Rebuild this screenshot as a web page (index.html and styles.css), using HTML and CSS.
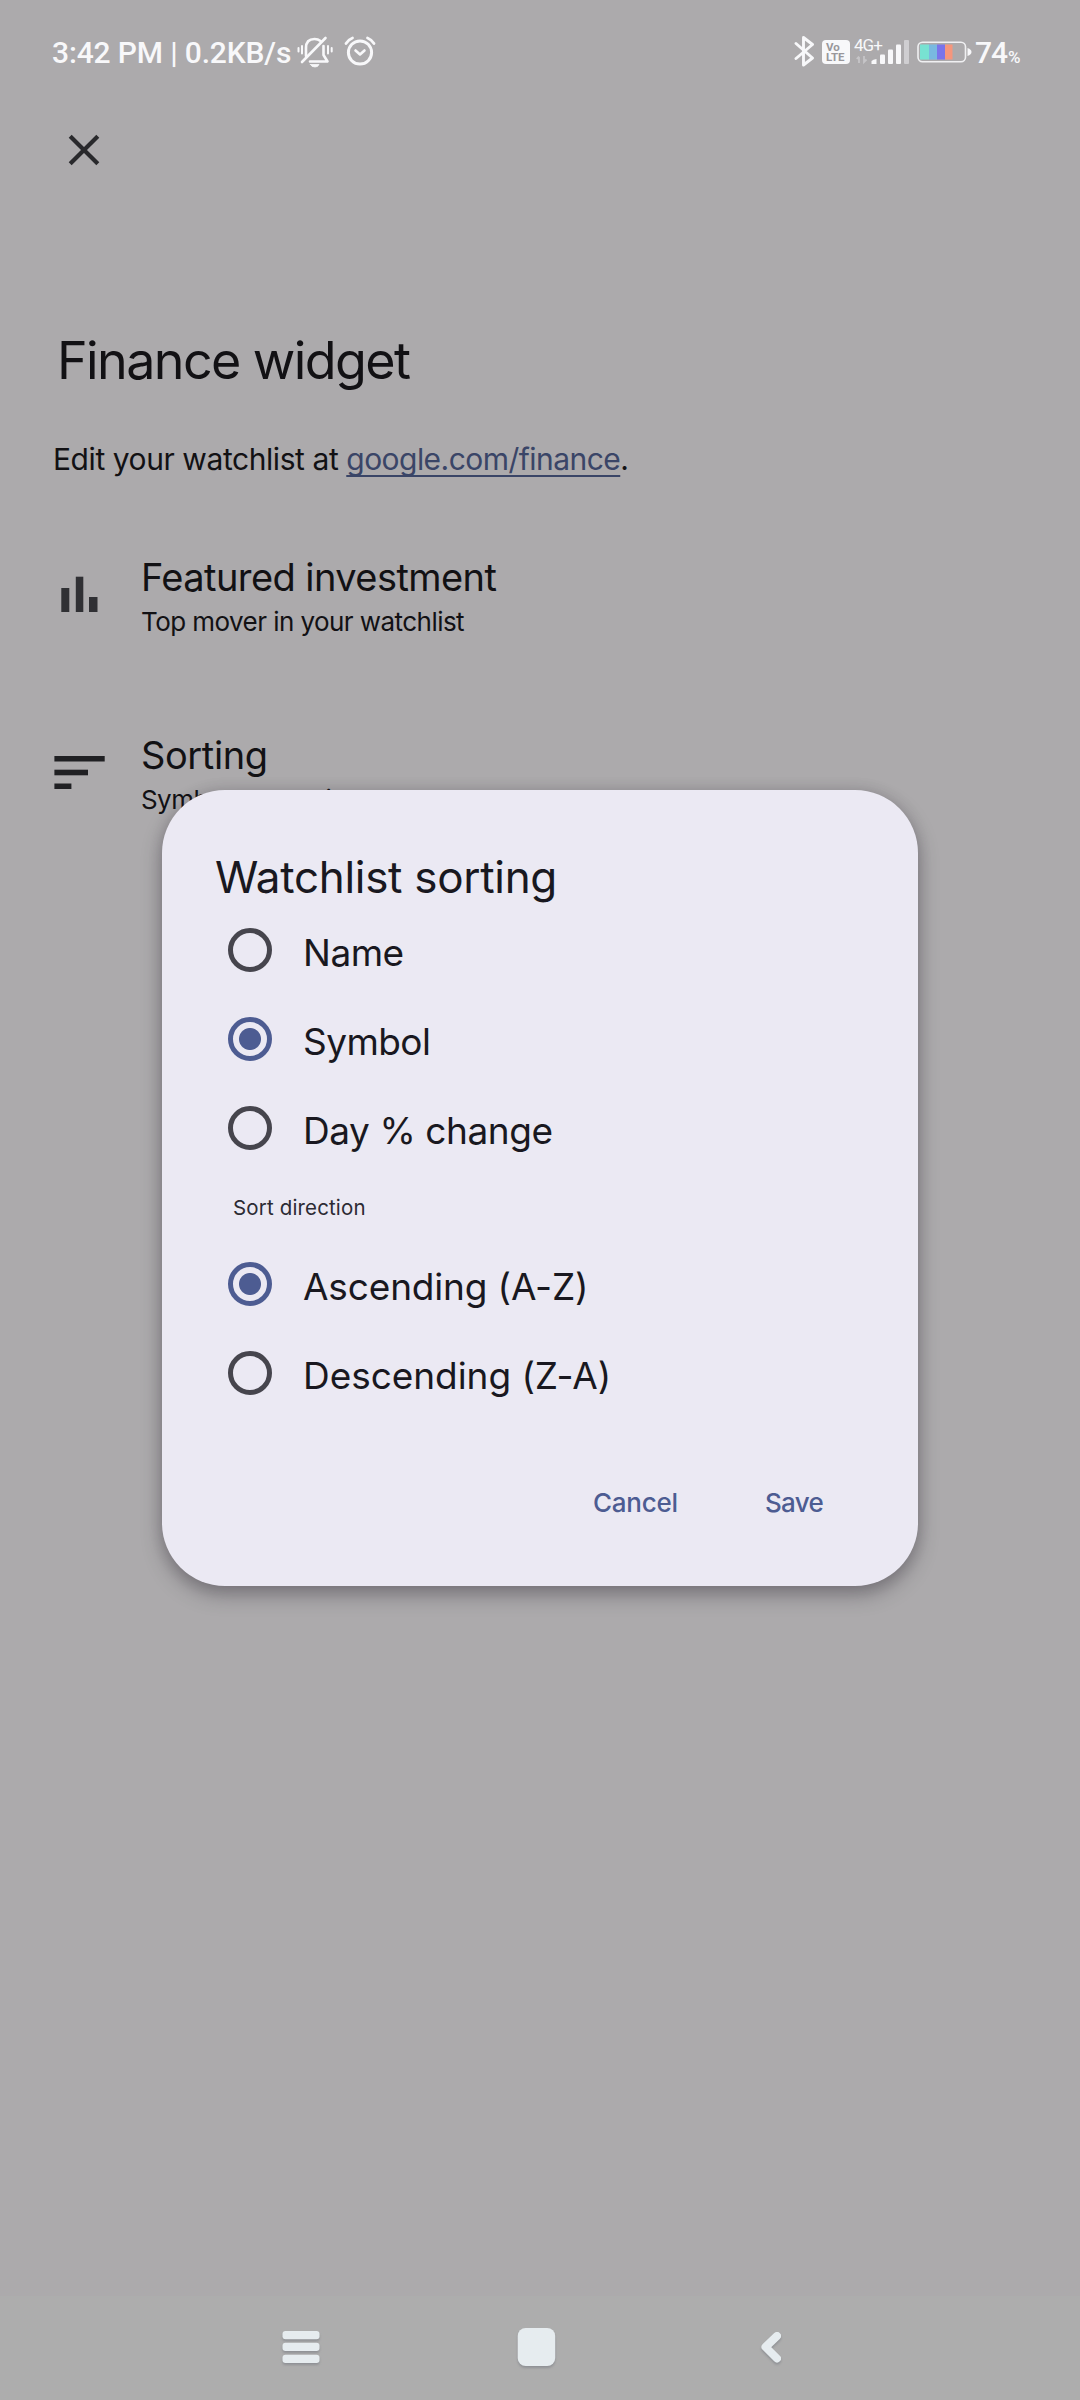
FILE: index.html
```html
<!DOCTYPE html>
<html lang="en">
<head>
<meta charset="utf-8">
<title>Finance widget</title>
<link rel="stylesheet" href="styles.css">
</head>
<body>
<div class="screen">
  <header class="status">
    <span class="clock">3:42 PM | 0.2KB/s</span>
    <svg class="bell" width="38" height="34" viewBox="296 35 38 34" fill="none" stroke="#f8f8fa" stroke-width="2.6" stroke-linecap="round" stroke-linejoin="round">
      <path d="M306 56 V48 Q306 39 314.500 39 Q318 39 320.500 41"/>
      <path d="M323.500 46 V55 L327.500 61.500 H310"/>
      <path d="M325.500 38 L302 62"/>
      <path d="M310.500 64.500 H319 Q318 67 315 67 Q311.500 67 310.500 64.500Z" fill="#f8f8fa" stroke-width="0.800"/>
      <path d="M298.500 48 V51.500 M302 46 V53.500 M328 46 V53.500 M331.700 48 V51.500" stroke-width="2"/>
    </svg>
    <svg class="alarm" width="34" height="32" viewBox="343 35 34 32" fill="none" stroke="#f8f8fa" stroke-linecap="round" stroke-linejoin="round">
      <circle cx="360" cy="52.500" r="11.600" stroke-width="3"/>
      <path d="M355.500 50.500 L360 54.500 L364.500 50.500" stroke-width="2.600"/>
      <path d="M346 43.500 Q348.500 39.500 352.500 38 M374 43.500 Q371.500 39.500 367.500 38" stroke-width="2.800"/>
    </svg>
    <div class="indicators">
      <svg width="22" height="32" viewBox="793 35 22 32" fill="none" stroke="#f8f8fa" stroke-width="2.900" stroke-linejoin="round" stroke-linecap="round">
        <path d="M795 43.500 L811.500 58 L802.500 65 V37.500 L811.500 44.500 L795 58.500"/>
      </svg>
      <div class="volte"><span>Vo</span><span>LTE</span></div>
      <div class="signal">
        <span class="network">4G+</span>
        <svg width="56" height="32" viewBox="854 35 56 32">
          <path d="M859 63 V57 M856.800 59 L859 56.500 M864 56 V62 L866.500 59.500" fill="none" stroke="#c6c5c8" stroke-width="1.800"/>
          <g fill="#f8f8fa">
            <path d="M871.500 64 V61 Q873 59.500 876.500 59 V64Z"/>
            <rect x="880" y="54.500" width="5" height="9.500" rx="1"/>
            <rect x="888" y="49.500" width="5" height="14.500" rx="1"/>
            <rect x="896" y="44.500" width="5" height="19.500" rx="1"/>
          </g>
          <rect x="904" y="40" width="5" height="24" rx="1" fill="#cfced1"/>
        </svg>
      </div>
      <svg class="battery" width="56" height="24" viewBox="916 40 56 24">
        <rect x="920" y="44.500" width="9" height="15" fill="#78e2d2"/>
        <rect x="929" y="44.500" width="8" height="15" fill="#79b9e0"/>
        <rect x="937" y="44.500" width="8" height="15" fill="#7a74ea"/>
        <rect x="945" y="44.500" width="7.500" height="15" fill="#f6967c"/>
        <rect x="918" y="42.300" width="47.500" height="19.400" rx="4.500" fill="none" stroke="#f0f0f2" stroke-width="1.600"/>
        <path d="M967.500 48 Q971.500 49.500 971.500 52 Q971.500 54.500 967.500 56Z" fill="#f8f8fa"/>
      </svg>
      <div class="level"><span>74</span><small>%</small></div>
    </div>
  </header>

  <main class="page">
    <svg class="close" width="32" height="32" viewBox="0 0 32 32" stroke="#29292c" stroke-width="4.200">
      <path d="M2.200 2.200 L29.800 29.800 M29.800 2.200 L2.200 29.800"/>
    </svg>
    <h1>Finance widget</h1>
    <p class="hint">Edit your watchlist at <a>google.com/finance</a>.</p>
    <div class="setting">
      <svg width="52" height="88" viewBox="54 554 52 88" fill="#303034">
        <rect x="61.300" y="588" width="8" height="24"/>
        <rect x="75.800" y="576.700" width="7.500" height="35.300"/>
        <rect x="89" y="597" width="8.500" height="15"/>
      </svg>
      <div>
        <h2>Featured investment</h2>
        <p>Top mover in your watchlist</p>
      </div>
    </div>
    <div class="setting">
      <svg width="52" height="88" viewBox="54 732 52 88" fill="#202023">
        <rect x="54.400" y="756" width="50.300" height="5.500"/>
        <rect x="54.400" y="769.700" width="33.600" height="5.600"/>
        <rect x="54.400" y="783.500" width="17" height="5.500"/>
      </svg>
      <div>
        <h2 class="sorting">Sorting</h2>
        <p class="current">Symbol, ascending</p>
      </div>
    </div>
  </main>

  <nav class="navbar">
    <svg width="40" height="44" viewBox="281 2326 40 44" fill="#e6ecef">
      <rect x="282.500" y="2331" width="37" height="8.200" rx="3"/>
      <rect x="282.500" y="2342.700" width="37" height="8.300" rx="3"/>
      <rect x="282.500" y="2354.700" width="37" height="8.300" rx="3"/>
    </svg>
    <svg width="40" height="44" viewBox="516 2326 40 44" fill="#e6ecef">
      <rect x="517.700" y="2328" width="37.500" height="38" rx="8"/>
    </svg>
    <svg width="40" height="44" viewBox="751 2326 40 44" fill="none" stroke="#e6ecef" stroke-width="8" stroke-linecap="round" stroke-linejoin="round">
      <path d="M777 2336 L765.500 2347 L777 2358.500"/>
    </svg>
  </nav>

  <section class="dialog">
    <h2>Watchlist sorting</h2>
    <div class="option"><i class="radio"></i><span class="name">Name</span></div>
    <div class="option"><i class="radio on"></i><span class="symbol">Symbol</span></div>
    <div class="option"><i class="radio"></i><span class="day">Day % change</span></div>
    <p class="direction">Sort direction</p>
    <div class="option"><i class="radio on"></i><span class="asc">Ascending (A-Z)</span></div>
    <div class="option"><i class="radio"></i><span class="desc">Descending (Z-A)</span></div>
    <div class="actions"><span class="cancel">Cancel</span><span class="save">Save</span></div>
  </section>
</div>
</body>
</html>
```
FILE: styles.css
```css
* { box-sizing: border-box; }
body { margin: 0; font-family: Inter, "Liberation Sans", sans-serif; }
h1, h2, p { margin: 0; font-weight: 400; }
svg { display: block; flex: none; }

.screen {
  position: relative;
  width: 1080px;
  height: 2400px;
  display: flex;
  flex-direction: column;
  background: #acaaac;
  color: #121114;
  overflow: hidden;
  white-space: nowrap;
}

.status {
  height: 104px;
  display: flex;
  align-items: flex-start;
  padding: 35px 59px 0 52px;
  color: #f8f8fa;
  font-family: Roboto, sans-serif;
  font-weight: 500;
}
.clock { width: 244px; font-size: 30px; line-height: 35px; letter-spacing: -0.150px; }
.alarm { margin-left: 9px; }
.indicators { margin-left: auto; display: flex; }
.volte {
  width: 28px;
  height: 24px;
  margin: 5px 4px 0 6px;
  padding: 2px 0 0 4px;
  border-radius: 4px;
  background: #f8f8fa;
  color: #99979b;
  font-size: 11.500px;
  font-weight: 700;
  line-height: 10px;
}
.volte span { display: block; }
.signal { position: relative; width: 56px; }
.network {
  position: absolute;
  left: 0;
  top: 0;
  font-size: 17px;
  font-weight: 400;
  line-height: 20px;
  letter-spacing: -1px;
}
.battery { margin: 5px 0 0 6px; }
.level { width: 46px; margin-left: 3px; font-size: 30px; line-height: 35px; letter-spacing: -1px; }
.level small { font-size: 17px; margin-left: 1px; letter-spacing: 0; }

.page { flex: 1; padding-left: 54px; }
.close { margin: 30px 0 163px 13.500px; }
h1 { margin-left: 3px; font-size: 52px; line-height: 64px; letter-spacing: -1.600px; }
.hint { margin: 46px 0 75px -1px; font-size: 30px; line-height: 40px; letter-spacing: -0.430px; }
.hint a {
  color: #3a4567;
  letter-spacing: -0.540px;
  text-decoration: underline 2px;
  text-underline-offset: 5px;
  text-decoration-skip-ink: none;
}
.setting { display: flex; gap: 35px; height: 88px; margin-bottom: 90px; }
.setting h2 { font-size: 38px; line-height: 46px; letter-spacing: -0.570px; }
.setting h2.sorting { letter-spacing: -0.400px; }
.setting p { padding-top: 1px; font-size: 26px; line-height: 42px; letter-spacing: -0.560px; }
.setting p.current { word-spacing: -4px; }

.navbar {
  height: 104px;
  padding: 30px 289px 0 281px;
  display: flex;
  justify-content: space-between;
  background: #adadad;
}
.navbar svg { filter: drop-shadow(0 2px 1px rgba(90, 95, 105, 0.35)); }

.dialog {
  position: absolute;
  left: 162px;
  top: 790px;
  width: 756px;
  height: 796px;
  padding: 59px 54px 0 53px;
  border-radius: 63px;
  background: #ebe9f3;
  color: #191820;
  box-shadow: 0 9px 20px rgba(50, 46, 56, 0.4), 0 0 14px rgba(50, 46, 56, 0.16);
}
.dialog h2 { margin-bottom: 1px; font-size: 44px; line-height: 56px; letter-spacing: -0.300px; }
.option { display: flex; align-items: flex-start; height: 89px; padding: 22px 0 0 13px; gap: 31px; font-size: 37px; line-height: 46px; }
.option span { margin-top: 2px; }
.radio {
  width: 44px;
  height: 44px;
  border: 5px solid #46454d;
  border-radius: 50%;
}
.radio.on { border-color: #4d5c92; background: radial-gradient(circle, #4d5c92 10.500px, transparent 11.500px); }
.name { letter-spacing: -0.500px; }
.symbol { letter-spacing: -0.560px; }
.day { letter-spacing: -0.430px; }
.asc { letter-spacing: -0.160px; }
.desc { letter-spacing: -0.050px; }
.direction { margin: 20px 0 17px 18px; font-size: 20.500px; line-height: 30px; letter-spacing: 0.150px; color: #2c2b33; }
.actions { display: flex; padding-left: 378px; margin-top: 65px; font-size: 26px; font-weight: 500; line-height: 40px; color: #4d5c92; }
.cancel { width: 172px; letter-spacing: -0.250px; }
.save { letter-spacing: -0.700px; }
```
